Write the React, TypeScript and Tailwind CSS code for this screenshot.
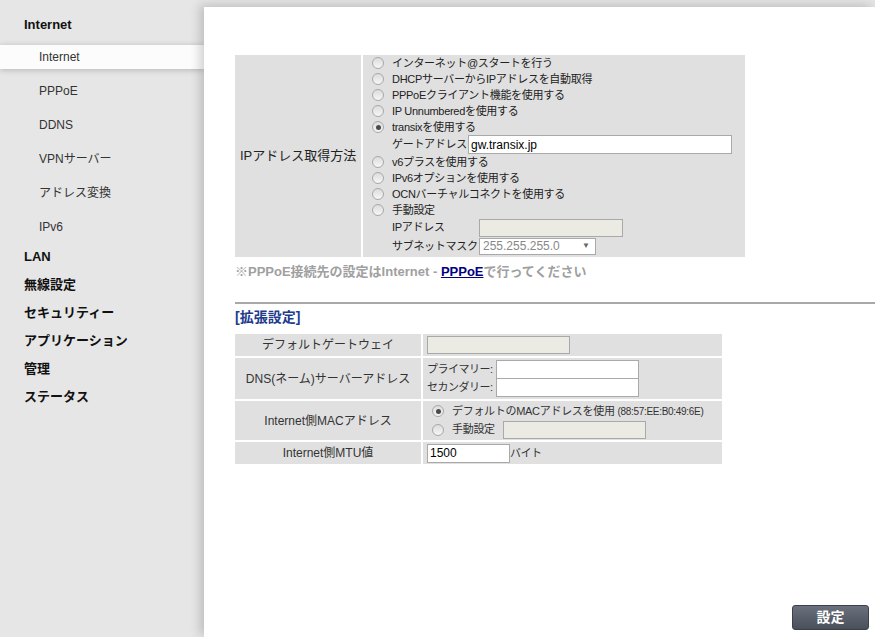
import React from 'react';

const font = { fontFamily: '"Liberation Sans", "Noto Sans CJK JP", sans-serif' };

function Radio({ checked }: { checked?: boolean }) {
  return (
    <span className="w-[12px] h-[12px] rounded-full border border-[#a8a8a8] bg-gradient-to-b from-[#dcdcdc] to-[#f6f6f6] flex items-center justify-center shrink-0">
      {checked && <span className="w-[5px] h-[5px] rounded-full bg-[#4a4a4a]" />}
    </span>
  );
}

function RadioRow({ label, checked }: { label: string; checked?: boolean }) {
  return (
    <div className="h-[16px] flex items-center gap-[8px] whitespace-nowrap">
      <Radio checked={checked} />
      <span>{label}</span>
    </div>
  );
}

function TextBox({ w, h = 19, value, disabled }: { w: number; h?: number; value?: string; disabled?: boolean }) {
  return (
    <div
      className={
        'border border-[#a9a9a9] px-[2px] flex items-center text-[12px] tracking-normal text-black shrink-0 ' +
        (disabled ? 'bg-[#ebebe4]' : 'bg-white')
      }
      style={{ width: w, height: h }}
    >
      {value}
    </div>
  );
}

const subMenu = ['Internet', 'PPPoE', 'DDNS', 'VPNサーバー', 'アドレス変換', 'IPv6'];
const topMenu = ['LAN', '無線設定', 'セキュリティー', 'アプリケーション', '管理', 'ステータス'];

export default function App() {
  return (
    <div className="w-[875px] h-[637px] flex bg-[#e6e6e6] overflow-hidden" style={font}>
      <aside className="w-[204px] shrink-0 pt-[11px]">
        <div className="h-[28px] flex items-center pl-[24px] text-[13px] font-bold text-[#111]">Internet</div>
        <div className="mt-[6px] flex flex-col gap-[10px]">
          {subMenu.map((m, i) => (
            <div
              key={m}
              className={
                'h-[24px] flex items-center pl-[39px] text-[12px] text-[#333] ' +
                (i === 0 ? 'bg-[#fcfcfc] shadow-[0_1px_6px_rgba(0,0,0,0.22)]' : '')
              }
            >
              {m}
            </div>
          ))}
        </div>
        <div className="mt-[4px] flex flex-col">
          {topMenu.map((m) => (
            <div key={m} className="h-[28px] flex items-center pl-[24px] text-[13px] font-bold text-[#111]">
              {m}
            </div>
          ))}
        </div>
      </aside>

      <main className="flex-1 mt-[7px] bg-white shadow-[-4px_-2px_10px_rgba(0,0,0,0.18)] z-10 flex flex-col justify-between">
        <div className="pt-[48px] pl-[31px]">
          {/* IP address method */}
          <div className="w-[510px] grid grid-cols-[126px_382px] gap-x-[2px] text-[#222]">
            <div className="bg-[#e0e0e0] flex items-center pl-[5px] text-[13px] whitespace-nowrap">IPアドレス取得方法</div>
            <div className="bg-[#e0e0e0] pl-[9px] pb-[2px] text-[11px] tracking-[-0.3px]">
              <RadioRow label="インターネット@スタートを行う" />
              <RadioRow label="DHCPサーバーからIPアドレスを自動取得" />
              <RadioRow label="PPPoEクライアント機能を使用する" />
              <RadioRow label="IP Unnumberedを使用する" />
              <RadioRow label="transixを使用する" checked />
              <div className="h-[19px] flex items-center pl-[20px] gap-[4px] whitespace-nowrap">
                <span className="w-[72px]">ゲートアドレス</span>
                <TextBox w={264} value="gw.transix.jp" />
              </div>
              <RadioRow label="v6プラスを使用する" />
              <RadioRow label="IPv6オプションを使用する" />
              <RadioRow label="OCNバーチャルコネクトを使用する" />
              <RadioRow label="手動設定" />
              <div className="h-[19px] flex items-center pl-[20px] whitespace-nowrap">
                <span className="w-[87px]">IPアドレス</span>
                <TextBox w={144} h={18} disabled />
              </div>
              <div className="h-[18px] flex items-center pl-[20px] whitespace-nowrap">
                <span className="w-[87px]">サブネットマスク</span>
                <div className="w-[117px] h-[17px] border border-[#a9a9a9] bg-white flex items-center justify-between px-[3px] text-[12px] tracking-normal text-[#888]">
                  <span>255.255.255.0</span>
                  <span className="text-[8px] text-[#666] pr-[2px]">▼</span>
                </div>
              </div>
            </div>
          </div>

          <p className="mt-[7px] leading-[16px] text-[13px] font-bold text-[#a0a0a0] whitespace-nowrap">
            ※PPPoE接続先の設定はInternet -{' '}
            <a href="#" className="text-[#000080] underline">PPPoE</a>で行ってください
          </p>

          <div className="mt-[22px] h-[2px] bg-[#a8a8a8]" />

          <h2 className="mt-[5px] leading-[16px] text-[14px] font-bold text-[#1e3c8c]">[拡張設定]</h2>

          {/* Extended settings */}
          <div className="mt-[9px] w-[487px] grid grid-cols-[186px_299px] gap-[2px] text-[12px] text-[#333] whitespace-nowrap">
            <div className="bg-[#e0e0e0] h-[22px] flex items-center justify-center">デフォルトゲートウェイ</div>
            <div className="bg-[#e0e0e0] h-[22px] flex items-center pl-[4px]">
              <TextBox w={143} h={18} disabled />
            </div>

            <div className="bg-[#e0e0e0] h-[41px] flex items-center justify-center">DNS(ネーム)サーバーアドレス</div>
            <div className="bg-[#e0e0e0] h-[41px] flex flex-col justify-center pl-[4px] text-[11px] tracking-[-0.5px]">
              <div className="flex items-center">
                <span className="w-[69px]">プライマリー:</span>
                <TextBox w={143} />
              </div>
              <div className="flex items-center -mt-px">
                <span className="w-[69px]">セカンダリー:</span>
                <TextBox w={143} />
              </div>
            </div>

            <div className="bg-[#e0e0e0] h-[39px] flex items-center justify-center">Internet側MACアドレス</div>
            <div className="bg-[#e0e0e0] h-[39px] flex flex-col justify-center pl-[9px] text-[11px] tracking-[-0.3px]">
              <div className="h-[18px] flex items-center gap-[8px]">
                <Radio checked />
                <span>
                  デフォルトのMACアドレスを使用 <span className="text-[10px]">(88:57:EE:B0:49:6E)</span>
                </span>
              </div>
              <div className="h-[19px] flex items-center gap-[8px]">
                <Radio />
                <span>手動設定</span>
                <TextBox w={143} h={18} disabled />
              </div>
            </div>

            <div className="bg-[#e0e0e0] h-[22px] flex items-center justify-center">Internet側MTU値</div>
            <div className="bg-[#e0e0e0] h-[22px] flex items-center pl-[4px] text-[11px] tracking-[-0.5px]">
              <TextBox w={83} value="1500" />
              <span>バイト</span>
            </div>
          </div>
        </div>

        <div className="flex justify-end pr-[6px] pb-[7px]">
          <button className="w-[77px] h-[25px] rounded-[3px] border border-[#3c4048] bg-gradient-to-b from-[#6a717c] to-[#4a505a] text-white text-[14px] font-bold">
            設定
          </button>
        </div>
      </main>
    </div>
  );
}
